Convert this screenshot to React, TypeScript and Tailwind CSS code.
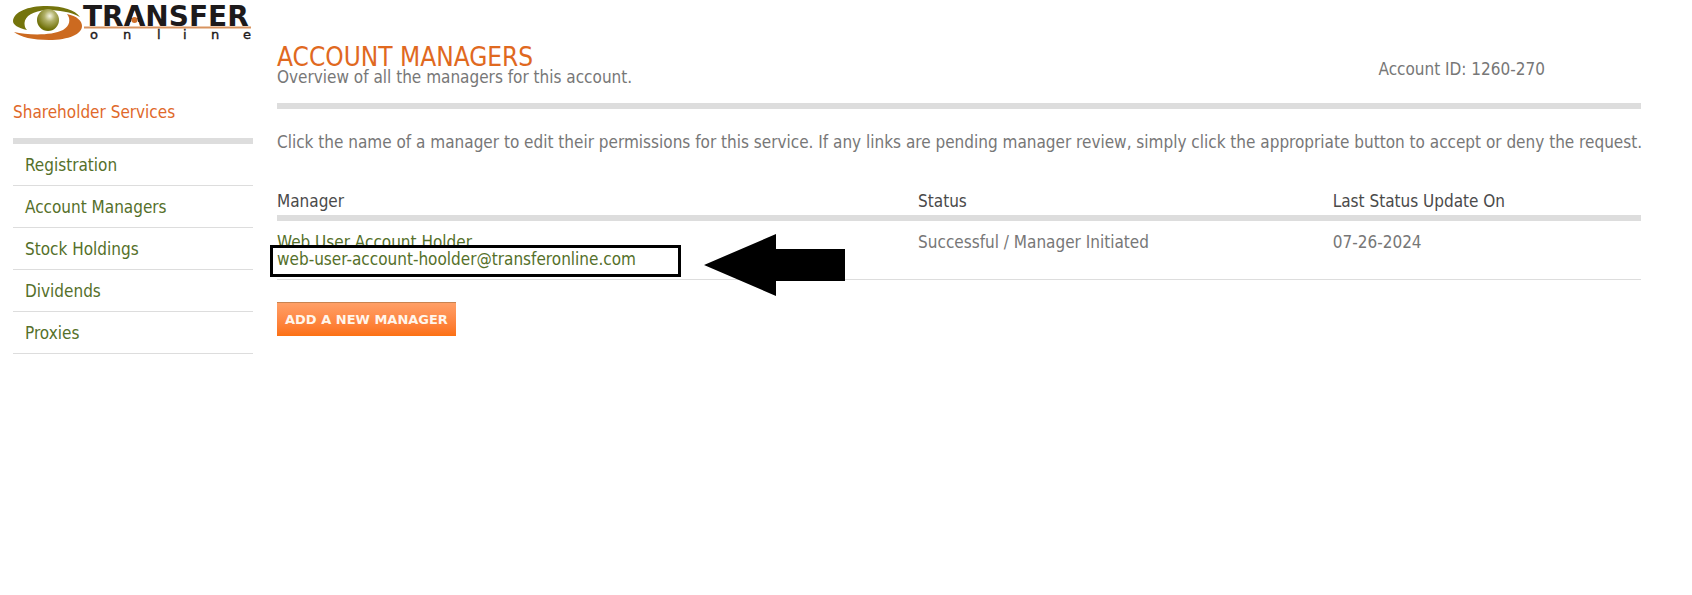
import React from 'react';

const navItems = ['Registration', 'Account Managers', 'Stock Holdings', 'Dividends', 'Proxies'];

const managers = [
    {
        name: 'Web User Account Holder',
        email: 'web-user-account-hoolder@transferonline.com',
        status: 'Successful / Manager Initiated',
        updated: '07-26-2024',
    },
];

const Logo: React.FC = () => (
    <svg width="240" height="42" viewBox="0 0 240 42" role="img" aria-label="Transfer Online">
        <defs>
            <radialGradient id="iris" cx="0.58" cy="0.32" r="0.62">
                <stop offset="0" stopColor="#f6f6e4" />
                <stop offset="0.4" stopColor="#b0b068" />
                <stop offset="1" stopColor="#6f7008" />
            </radialGradient>
        </defs>
        <path d="M0 21C1 12 14 6 34 6C50 6 62 10 67 17C58 12 46 10 34 10C20 11 12 16 11.500 23C11.500 26 12 28 14 30C5 28 0 25 0 21Z" fill="#74740c" />
        <path d="M1 32C14 35 38 36 50 30C57 26 58 19 54 14C64 16 69 21 69 26C69 34 56 40 36 40C20 40 7 37 1 32Z" fill="#cc6a20" />
        <circle cx="35" cy="20" r="11" fill="url(#iris)" />
        <text x="70" y="26" className="font-['DejaVu_Sans'] text-[28px] font-bold" fill="#1d1a1b">TRANSFER</text>
        {/* The A has a dot in place of its bar */}
        <path d="M121.500 11L126.500 26H116.500Z" fill="#ffffff" />
        <circle cx="121.500" cy="20" r="3" fill="#d0702a" />
        <path d="M71 27.500H238" stroke="#d8935f" strokeWidth="2" />
        <text x="77 110 144 170 198 230" y="39" className="font-['DejaVu_Sans'] text-[13px]" fill="#1d1a1b" stroke="#1d1a1b" strokeWidth="0.4">online</text>
    </svg>
);

const App: React.FC = () => {
    return (
        <div className="flex gap-6 bg-white pl-[13px] pr-[51px] font-['DejaVu_Sans_Condensed','Noto_Sans',sans-serif] text-[17px] leading-[17px] text-[#777777]">
            {/* Sidebar */}
            <aside className="w-60 shrink-0">
                <Logo />
                <h2 className="mt-[62px] border-b-6 border-[#dddddd] pb-[17px] text-[#e0692a]">Shareholder Services</h2>
                <nav>
                    <ul>
                        {navItems.map((item) => (
                            <li key={item} className="border-b border-[#dddddd]">
                                <a href="#" className="block px-3 pt-[13px] pb-[11px] text-[#55702a]">{item}</a>
                            </li>
                        ))}
                    </ul>
                </nav>
            </aside>

            <main className="min-w-0 flex-1">
                {/* Page title */}
                <header className="flex items-end justify-between border-b-6 border-[#dddddd] pt-[46px] pb-[17px]">
                    <div>
                        <h1 className="text-[26px] leading-[23px] text-[#e0691f]">ACCOUNT MANAGERS</h1>
                        <p>Overview of all the managers for this account.</p>
                    </div>
                    <p className="mr-24 pb-2">Account ID: 1260-270</p>
                </header>

                <p className="mt-[25px] xl:whitespace-nowrap">
                    Click the name of a manager to edit their permissions for this service. If any links are pending manager review, simply click the appropriate button to accept or deny the request.
                </p>

                <table className="mt-[42px] w-full table-fixed text-left">
                    <thead>
                        <tr className="border-b-6 border-[#dddddd] text-[#4a4a4a]">
                            <th className="w-[47%] pb-[5px] font-normal">Manager</th>
                            <th className="w-[30.4%] pb-[5px] font-normal">Status</th>
                            <th className="pb-[5px] font-normal">Last Status Update On</th>
                        </tr>
                    </thead>
                    <tbody>
                        {managers.map((m) => (
                            <tr key={m.email} className="border-b border-[#dddddd] align-top">
                                <td className="pt-[13px] pb-[11px]">
                                    <a href="#" className="relative block w-fit text-[#55702a]">
                                        {m.name}
                                        <br />
                                        {m.email}
                                        {/* Highlight box and pointer */}
                                        <span className="absolute top-[11px] -left-[7px] h-8 w-[411px] border-3 border-black" />
                                        <svg className="absolute top-0 left-[427px]" width="141" height="62" viewBox="0 0 141 62">
                                            <path d="M0 31L72 0V15H141V47H72V62Z" fill="#000000" />
                                        </svg>
                                    </a>
                                </td>
                                <td className="pt-[13px]">{m.status}</td>
                                <td className="pt-[13px]">{m.updated}</td>
                            </tr>
                        ))}
                    </tbody>
                </table>

                <button
                    type="button"
                    className="mt-[22px] h-[34px] border-t border-[#c98350] bg-linear-to-b from-[#ff9f66] to-[#fc7010] px-2 font-['DejaVu_Sans'] text-[13px] font-bold text-[#fff6ec]"
                >
                    ADD A NEW MANAGER
                </button>
            </main>
        </div>
    );
};

export default App;
